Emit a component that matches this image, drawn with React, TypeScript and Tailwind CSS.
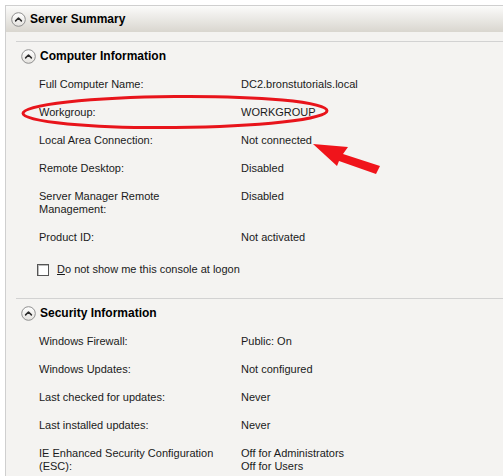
import React from "react";

function CollapseIcon() {
  return (
    <svg width="15" height="15" viewBox="0 0 15 15" className="shrink-0">
      <defs>
        <linearGradient id="cg" x1="0" y1="0" x2="0" y2="1">
          <stop offset="0" stopColor="#ffffff" />
          <stop offset="1" stopColor="#e4e2de" />
        </linearGradient>
      </defs>
      <circle cx="7.5" cy="7.5" r="6.8" fill="url(#cg)" stroke="#8f8f8f" strokeWidth="1" />
      <path d="M4.6 8.9 L7.5 6 L10.4 8.9" fill="none" stroke="#2a2a2a" strokeWidth="1.5" strokeLinecap="round" strokeLinejoin="round" />
    </svg>
  );
}

type Row = { label: string[]; value: string[] };

const computer: Row[] = [
  { label: ["Full Computer Name:"], value: ["DC2.bronstutorials.local"] },
  { label: ["Workgroup:"], value: ["WORKGROUP"] },
  { label: ["Local Area Connection:"], value: ["Not connected"] },
  { label: ["Remote Desktop:"], value: ["Disabled"] },
  { label: ["Server Manager Remote", "Management:"], value: ["Disabled"] },
  { label: ["Product ID:"], value: ["Not activated"] },
];

const security: Row[] = [
  { label: ["Windows Firewall:"], value: ["Public: On"] },
  { label: ["Windows Updates:"], value: ["Not configured"] },
  { label: ["Last checked for updates:"], value: ["Never"] },
  { label: ["Last installed updates:"], value: ["Never"] },
  { label: ["IE Enhanced Security Configuration", "(ESC):"], value: ["Off for Administrators", "Off for Users"] },
];

function Rows({ rows }: { rows: Row[] }) {
  return (
    <div className="flex flex-col gap-[15px] pl-[23px]">
      {rows.map((r, i) => (
        <div key={i} className="flex leading-[13px]">
          <div className="w-[202px] shrink-0">
            {r.label.map((l, j) => (
              <div key={j}>{l}</div>
            ))}
          </div>
          <div>
            {r.value.map((v, j) => (
              <div key={j}>{v}</div>
            ))}
          </div>
        </div>
      ))}
    </div>
  );
}

function SectionHeader({ title }: { title: string }) {
  return (
    <div className="flex h-[28px] items-center gap-[4px] pl-[5px]">
      <CollapseIcon />
      <span className="text-[12px] font-bold text-black">{title}</span>
    </div>
  );
}

export default function App() {
  return (
    <div
      className="relative h-[476px] w-[503px] overflow-hidden bg-white pl-[5px] pt-[5px] text-[11px] text-[#1a1a1a]"
      style={{ fontFamily: '"Liberation Sans", Arial, sans-serif' }}
    >
      <div className="h-full border-l border-t border-[#cfcfcf] bg-[#f4f3f1]">
        <div className="flex h-[26px] items-center gap-[4px] bg-gradient-to-b from-[#fbfbfa] to-[#d9d6cf] pl-[5px]">
          <CollapseIcon />
          <span className="text-[12px] font-bold text-black">Server Summary</span>
        </div>
        <div className="pl-[10px] pt-[9px]">
          <div className="border-t border-[#d2d2d2]">
            <SectionHeader title="Computer Information" />
            <div className="pt-[8px]">
              <Rows rows={computer} />
            </div>
            <div className="mt-[19px] flex items-center gap-[8px] pl-[21px] leading-[13px]">
              <span className="h-[12px] w-[12px] border border-[#555] bg-white shadow-[inset_1px_1px_0_#bbb]" />
              <span>
                <span className="underline">D</span>o not show me this console at logon
              </span>
            </div>
          </div>
          <div className="mt-[22px] border-t border-[#d2d2d2]">
            <SectionHeader title="Security Information" />
            <div className="pt-[8px]">
              <Rows rows={security} />
            </div>
          </div>
        </div>
      </div>
      <svg className="pointer-events-none absolute left-0 top-0" width="503" height="476">
        <ellipse cx="175" cy="112" rx="152" ry="15.5" fill="none" stroke="#e8141b" strokeWidth="3" transform="rotate(-0.5 175 112)" />
        <polygon points="313,144 348,147 343,154 380,166 376,174 339,161 337,166" fill="#f0141b" />
      </svg>
    </div>
  );
}
